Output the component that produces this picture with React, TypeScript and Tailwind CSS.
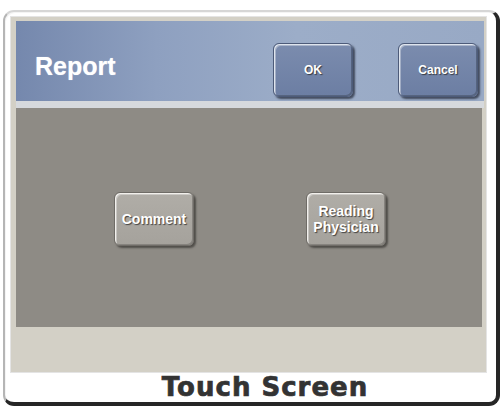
import React from "react";

function KeyButton({
  label,
  tone,
}: {
  label: React.ReactNode;
  tone: "blue" | "gray";
}) {
  const toneCls =
    tone === "blue"
      ? "bg-[linear-gradient(180deg,#7b8cae_0%,#6c7ea3_100%)] border-[#4d5b79] shadow-[inset_1px_1px_0_#dfe5ee,inset_2px_2px_0_rgba(255,255,255,0.35),inset_-1px_-1px_0_#56647f,2px_2px_2px_rgba(20,25,40,0.65)] text-[12px]"
      : "bg-[linear-gradient(180deg,#b0ada7_0%,#a5a29c_100%)] border-[#6f6c67] shadow-[inset_1px_1px_0_#f2f0ec,inset_2px_2px_0_rgba(255,255,255,0.35),inset_-1px_-1px_0_#86837e,2px_2px_2px_rgba(40,38,35,0.6)] text-[14px] leading-[16px]";
  return (
    <div
      className={`w-[80px] h-[54px] rounded-[6px] border flex items-center justify-center text-center font-bold text-white [font-family:'Liberation_Sans',Arial,sans-serif] [text-shadow:1px_1px_1px_rgba(40,40,40,0.8)] ${toneCls}`}
    >
      {label}
    </div>
  );
}

export default function App() {
  return (
    <div className="w-[503px] h-[409px] bg-white pt-[10px] pl-[3px]">
      <div className="w-[497px] h-[396px] rounded-[11px] border-l-2 border-t-2 border-l-[#b5b5b5] border-t-[#d6d6d6] border-r-[4px] border-b-[4px] border-r-[#262626] border-b-[#262626] bg-white flex flex-col pl-[5px] pt-[4px] [box-shadow:inset_1px_1px_0_#f4f4f4]">
        {/* display glass */}
        <div className="w-[477px] h-[357px] bg-[#d3d0c6] flex flex-col pl-[5px] pt-[4px] pr-[4px] border border-[#e4e4e4]">
          {/* title bar */}
          <div className="h-[80px] w-[468px] bg-[linear-gradient(90deg,#7588ad_0%,#8ea0c0_30%,#9cadc8_60%,#98a9c5_100%)] flex items-end justify-between pl-[19px] pr-[6px] pb-[4px]">
            <div className="self-start mt-[33px] text-white font-bold text-[25px] leading-none [font-family:'Liberation_Sans',Arial,sans-serif] [text-shadow:0_0_1px_rgba(255,255,255,0.6)]">
              Report
            </div>
            <div className="flex gap-[45px]">
              <KeyButton tone="blue" label="OK" />
              <KeyButton tone="blue" label="Cancel" />
            </div>
          </div>
          {/* divider */}
          <div className="h-[7px] w-[468px] bg-[#d6d9dd]" />
          {/* work area */}
          <div className="h-[219px] w-[466px] bg-[#8e8b85] flex items-center justify-center gap-[112px] pl-[2px] pt-[2px]">
            <KeyButton tone="gray" label="Comment" />
            <KeyButton
              tone="gray"
              label={
                <span>
                  Reading
                  <br />
                  Physician
                </span>
              }
            />
          </div>
        </div>
        <div className="flex-1 flex justify-center pl-[24px]">
          <div className="text-[26px] leading-[28px] font-bold text-[#333333] [font-family:'DejaVu_Sans',Verdana,sans-serif] tracking-[1px] [-webkit-text-stroke:0.7px_#333333]">
            Touch Screen
          </div>
        </div>
      </div>
    </div>
  );
}
